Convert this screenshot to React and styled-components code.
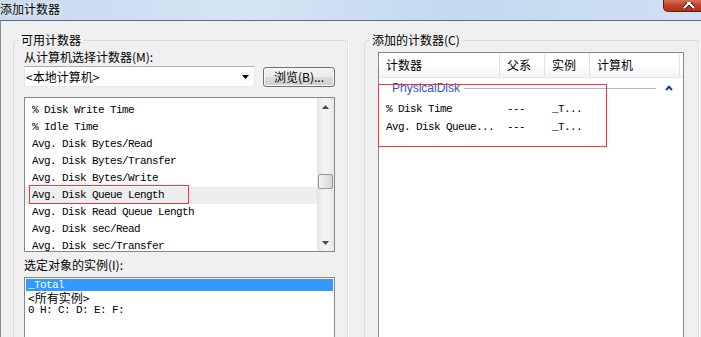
import React from 'react';
import styled, { createGlobalStyle } from 'styled-components';

const cjk = `"Noto Sans CJK SC", "Noto Sans", sans-serif`;
const mono = `"Liberation Mono", "Noto Sans CJK SC", monospace`;

const GlobalStyle = createGlobalStyle`
  html, body { margin: 0; padding: 0; background: #f0f0f0; overflow: hidden; }
  body { font-family: ${cjk}; font-size: 12px; color: #000; }
`;

const Window = styled.div`
  width: 701px;
  height: 337px;
  display: flex;
  flex-direction: column;
  overflow: hidden;
`;

const TitleBar = styled.div`
  height: 20px;
  flex: none;
  display: flex;
  align-items: flex-start;
  background: linear-gradient(to right, #c6daee 0%, #d4e5f4 35%, #c3d9ee 65%, #cfe1f2 100%);
`;

const TitleText = styled.div`
  font-size: 12px;
  line-height: 16px;
  padding-top: 1px;
  text-shadow: 0 0 6px rgba(255, 255, 255, 0.95);
`;

const CloseButton = styled.div`
  margin-left: auto;
  margin-right: -5px;
  width: 43px;
  height: 12px;
  box-sizing: border-box;
  border: 1px solid #5a2016;
  border-top: none;
  border-radius: 0 0 0 5px;
  background: linear-gradient(#d8715b, #c4432c 45%, #b5301b);
  overflow: hidden;
`;

const Body = styled.div`
  flex: 1;
  display: flex;
  align-items: flex-start;
  gap: 16px;
  border-top: 1px solid #5f6d7c;
  border-left: 1px solid #7d8a97;
  padding: 12px 0 0 12px;
`;

const GroupBox = styled.fieldset`
  box-sizing: border-box;
  width: 335px;
  height: 330px;
  min-width: 0;
  margin: 0;
  padding: ${p => p.$pt}px 0 0 ${p => p.$pl}px;
  border: 1px solid #d5dfe5;
  border-radius: 3px;
  box-shadow: 1px 1px 0 #fff;
`;

const Legend = styled.legend`
  margin-left: ${p => p.$ml}px;
  padding: 0 2px;
  font-size: 12px;
  line-height: 14px;
`;

const FieldLabel = styled.div`
  line-height: 14px;
  margin-top: ${p => p.$mt || 0}px;
`;

const ComboRow = styled.div`
  display: flex;
  align-items: center;
  gap: 8px;
  margin-top: 2px;
`;

const Combo = styled.div`
  box-sizing: border-box;
  width: 231px;
  height: 21px;
  display: flex;
  align-items: center;
  justify-content: space-between;
  padding: 0 5px 0 1px;
  background: #fff;
  border: 1px solid;
  border-color: #abadb3 #e3e9ef #e3e9ef #e2e3ea;
`;

const BrowseButton = styled.div`
  box-sizing: border-box;
  width: 72px;
  height: 20px;
  display: flex;
  align-items: center;
  justify-content: center;
  border: 1px solid #707070;
  border-radius: 3px;
  background: linear-gradient(#f2f2f2 0%, #ebebeb 50%, #dddddd 51%, #cfcfcf 100%);
  box-shadow: inset 0 0 0 1px #fbfbfb;
`;

const CounterList = styled.div`
  position: relative;
  box-sizing: border-box;
  width: 311px;
  height: 155px;
  margin-top: 10px;
  display: flex;
  background: #fff;
  border: 1px solid #828790;
  overflow: hidden;
`;

const Rows = styled.div`
  flex: 1;
  overflow: hidden;
  padding-top: 4px;
`;

const Row = styled.div`
  height: 17px;
  line-height: 17px;
  padding-left: 7px;
  font-family: ${mono};
  font-size: 11px;
  letter-spacing: -0.6px;
  white-space: nowrap;
  background: ${p => (p.$hot ? '#eeeeee' : 'transparent')};
`;

const ScrollBar = styled.div`
  width: 17px;
  display: flex;
  flex-direction: column;
  align-items: center;
  background: linear-gradient(to right, #e5e5e5, #f3f3f3 40%, #f3f3f3 60%, #e8e8e8);
`;

const ScrollArrow = styled.div`
  height: 17px;
  width: 17px;
  display: flex;
  align-items: center;
  justify-content: center;
  margin-top: ${p => (p.$end ? 'auto' : '0')};
`;

const Thumb = styled.div`
  box-sizing: border-box;
  width: 15px;
  height: 15px;
  margin-top: ${p => p.$offset}px;
  border: 1px solid #979797;
  border-radius: 2px;
  background: linear-gradient(to right, #f4f4f4, #e3e3e3 50%, #d7d7d7);
`;

const Annotation = styled.div`
  position: absolute;
  left: ${p => p.$x}px;
  top: ${p => p.$y}px;
  width: ${p => p.$w}px;
  height: ${p => p.$h}px;
  box-sizing: border-box;
  border: 1px solid #f2373c;
  pointer-events: none;
`;

const InstanceList = styled.div`
  box-sizing: border-box;
  width: 311px;
  height: 90px;
  margin-top: 5px;
  padding: 1px;
  background: #fff;
  border: 1px solid #828790;
`;

const InstanceRow = styled.div`
  height: ${p => (p.$mono ? 12 : 13)}px;
  line-height: ${p => (p.$mono ? 12 : 13)}px;
  padding-left: 2px;
  white-space: nowrap;
  font-family: ${p => (p.$mono ? mono : cjk)};
  font-size: ${p => (p.$mono ? 11 : 12)}px;
  letter-spacing: ${p => (p.$mono ? '-0.6px' : '0')};
  background: ${p => (p.$selected ? '#3399ff' : 'transparent')};
  color: ${p => (p.$selected ? '#fff' : '#000')};
`;

const ListView = styled.div`
  position: relative;
  box-sizing: border-box;
  width: 306px;
  height: 300px;
  background: #fff;
  border: 1px solid #828790;
`;

const Header = styled.div`
  display: flex;
  height: 24px;
  border-bottom: 1px solid #e8e8ea;
  background: linear-gradient(#ffffff 0%, #ffffff 45%, #f4f5f7 100%);
`;

const HeaderCell = styled.div`
  box-sizing: border-box;
  width: ${p => p.$w}px;
  padding-left: 7px;
  line-height: 24px;
  border-right: 1px solid #e3e4e6;
`;

const GroupRow = styled.div`
  display: flex;
  align-items: center;
  height: 18px;
  margin: 1px 0 3px;
  padding: 0 10px 0 13px;
`;

const GroupTitle = styled.span`
  font-family: "Liberation Sans", Arial, sans-serif;
  font-size: 12px;
  color: #2f56c8;
`;

const GroupLine = styled.div`
  flex: 1;
  height: 1px;
  margin: 0 9px 0 4px;
  background: #a9b8d8;
`;

const DataRow = styled.div`
  display: flex;
  height: 18px;
  line-height: 18px;
  font-family: ${mono};
  font-size: 11px;
  letter-spacing: -0.6px;
`;

const DataCell = styled.div`
  box-sizing: border-box;
  width: ${p => p.$w}px;
  padding-left: 7px;
  white-space: nowrap;
  overflow: hidden;
`;

const columns = [121, 45, 45, 90];

const counters = [
  '% Disk Write Time',
  '% Idle Time',
  'Avg. Disk Bytes/Read',
  'Avg. Disk Bytes/Transfer',
  'Avg. Disk Bytes/Write',
  'Avg. Disk Queue Length',
  'Avg. Disk Read Queue Length',
  'Avg. Disk sec/Read',
  'Avg. Disk sec/Transfer',
];

const added = [
  ['% Disk Time', '---', '_T...'],
  ['Avg. Disk Queue...', '---', '_T...'],
];

const Triangle = ({ up, color = '#4a4a4a', w = 7, h = 4 }) => (
  <svg width={w} height={h} viewBox={`0 0 ${w} ${h}`}>
    <polygon points={up ? `0,${h} ${w / 2},0 ${w},${h}` : `0,0 ${w},0 ${w / 2},${h}`} fill={color} />
  </svg>
);

export default function App() {
  return (
    <>
      <GlobalStyle />
      <Window>
        <TitleBar>
          <TitleText>添加计数器</TitleText>
          <CloseButton>
            <svg width="43" height="12" viewBox="0 0 43 12">
              <path d="M20 -4 L30 6 M30 -4 L20 6" stroke="#4a1a12" strokeWidth="4" />
              <path d="M20 -4 L30 6 M30 -4 L20 6" stroke="#fff" strokeWidth="2.2" />
            </svg>
          </CloseButton>
        </TitleBar>
        <Body>
          <GroupBox $pt={3} $pl={10}>
            <Legend $ml={-5}>可用计数器</Legend>
            <FieldLabel>从计算机选择计数器(M):</FieldLabel>
            <ComboRow>
              <Combo>
                <span>&lt;本地计算机&gt;</span>
                <Triangle color="#000" />
              </Combo>
              <BrowseButton>浏览(B)...</BrowseButton>
            </ComboRow>
            <CounterList>
              <Rows>
                {counters.map(c => (
                  <Row key={c} $hot={c === 'Avg. Disk Queue Length'}>{c}</Row>
                ))}
              </Rows>
              <ScrollBar>
                <ScrollArrow><Triangle up /></ScrollArrow>
                <Thumb $offset={59} />
                <ScrollArrow $end><Triangle /></ScrollArrow>
              </ScrollBar>
              <Annotation $x={4} $y={87} $w={160} $h={19} />
            </CounterList>
            <FieldLabel $mt={6}>选定对象的实例(I):</FieldLabel>
            <InstanceList>
              <InstanceRow $mono $selected>_Total</InstanceRow>
              <InstanceRow>&lt;所有实例&gt;</InstanceRow>
              <InstanceRow $mono>0 H: C: D: E: F:</InstanceRow>
            </InstanceList>
          </GroupBox>

          <GroupBox $pt={5} $pl={13}>
            <Legend $ml={-8}>添加的计数器(C)</Legend>
            <ListView>
              <Header>
                <HeaderCell $w={columns[0]}>计数器</HeaderCell>
                <HeaderCell $w={columns[1]}>父系</HeaderCell>
                <HeaderCell $w={columns[2]}>实例</HeaderCell>
                <HeaderCell $w={columns[3]}>计算机</HeaderCell>
              </Header>
              <GroupRow>
                <GroupTitle>PhysicalDisk</GroupTitle>
                <GroupLine />
                <svg width="8" height="6" viewBox="0 0 8 6">
                  <polyline points="1,5 4,1.8 7,5" fill="none" stroke="#1c3c8c" strokeWidth="2" />
                </svg>
              </GroupRow>
              {added.map(r => (
                <DataRow key={r[0]}>
                  {r.map((v, i) => (
                    <DataCell key={i} $w={columns[i]}>{v}</DataCell>
                  ))}
                </DataRow>
              ))}
              <Annotation $x={-1} $y={31} $w={229} $h={63} />
            </ListView>
          </GroupBox>
        </Body>
      </Window>
    </>
  );
}
